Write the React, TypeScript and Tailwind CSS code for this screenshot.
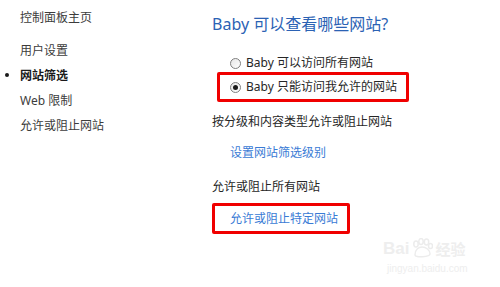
import React from "react";

const FONT = {
  fontFamily: '"Segoe UI", "Noto Sans", "Noto Sans CJK SC", sans-serif',
};

function Radio({ checked }: { checked?: boolean }) {
  return (
    <span className="w-[11px] h-[11px] shrink-0 rounded-full border border-[#7f7f7f] bg-gradient-to-br from-[#e6e6e6] to-white flex items-center justify-center">
      {checked && <span className="w-[5px] h-[5px] rounded-full bg-[#1a1a1a]" />}
    </span>
  );
}

const navItems = ["用户设置", "网站筛选", "Web 限制", "允许或阻止网站"];

export default function App() {
  return (
    <div
      className="relative w-[500px] h-[287px] bg-white overflow-hidden flex text-[12px] text-[#262626]"
      style={FONT}
    >
      {/* left nav */}
      <div className="w-[212px] shrink-0 pl-[20px] pt-[5px]">
        <div className="leading-[25px] mb-[8px] text-[#3c3c3c]">控制面板主页</div>
        {navItems.map((item) => (
          <div
            key={item}
            className={`relative leading-[25px] ${
              item === "网站筛选" ? "font-bold text-[#1a1a1a]" : "text-[#3c3c3c]"
            }`}
          >
            {item === "网站筛选" && (
              <span className="absolute left-[-15px] top-[10px] w-[4px] h-[4px] rounded-full bg-[#1a1a1a]" />
            )}
            {item}
          </div>
        ))}
      </div>

      {/* main */}
      <div className="flex-1 pt-[12px]">
        <div className="text-[16px] leading-[24px] text-[#2b62b4]">Baby 可以查看哪些网站?</div>

        <div className="ml-[5px] mt-[18px]">
          <div className="flex items-center gap-[5px] pl-[13px] h-[18px]">
            <Radio />
            <span>Baby 可以访问所有网站</span>
          </div>
          <div className="w-[192px] h-[30px] border-[3px] border-[#f00000] rounded-[2px] flex items-center gap-[5px] pl-[10px]">
            <Radio checked />
            <span>Baby 只能访问我允许的网站</span>
          </div>
        </div>

        <div className="mt-[10px] leading-[20px]">按分级和内容类型允许或阻止网站</div>
        <div className="mt-[11px] pl-[18px] leading-[20px] text-[#3a7bd5]">设置网站筛选级别</div>
        <div className="mt-[14px] leading-[20px]">允许或阻止所有网站</div>
        <div className="mt-[6px] w-[138px] h-[31px] border-[3px] border-[#f00000] rounded-[2px] flex items-center pl-[15px] text-[#3a7bd5]">
          允许或阻止特定网站
        </div>
      </div>

      {/* watermark */}
      <div className="absolute left-[383px] top-[238px] text-[#eeeeee] select-none">
        <div className="flex items-end gap-[2px]">
          <span className="text-[17px] leading-[18px] font-bold" style={{ fontFamily: '"Liberation Sans", sans-serif' }}>
            Bai
          </span>
          <span className="relative">
            <svg width="22" height="20" viewBox="0 0 22 20" className="block">
              <g fill="none" stroke="#ececec" strokeWidth="1.5">
                <ellipse cx="5" cy="6" rx="2.2" ry="3" />
                <ellipse cx="10" cy="3.5" rx="2.2" ry="3" />
                <ellipse cx="15.5" cy="4" rx="2.2" ry="3" />
                <ellipse cx="19.5" cy="8" rx="2" ry="2.6" />
                <path d="M4 17 C4 11 8 9 11 9 C15 9 19 12 19 16 C19 19 4 20 4 17 Z" />
              </g>
            </svg>
          </span>
          <span className="text-[15px] leading-[18px] font-bold">经验</span>
        </div>
        <div className="text-[10px] leading-[14px] mt-[4px] ml-[4px]" style={{ fontFamily: '"Liberation Sans", sans-serif' }}>
          jingyan.baidu.com
        </div>
      </div>
    </div>
  );
}
